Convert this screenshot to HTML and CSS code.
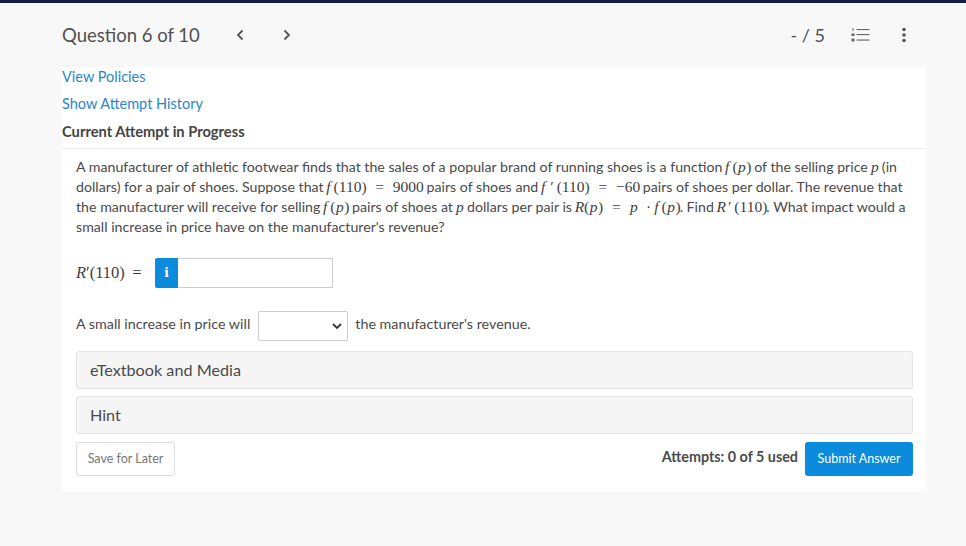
FILE: index.html
```html
<!DOCTYPE html>
<html lang="en">
<head>
<meta charset="utf-8">
<title>Question 6 of 10</title>
<link rel="stylesheet" href="styles.css">
</head>
<body>
<header class="topbar">
  <div class="title-group">
    <h1 class="title">Question 6 of 10</h1>
    <svg class="chev chev-left" width="10" height="12" viewBox="0 0 10 12"><path d="M7.5 1.5 3 6l4.500 4.500" fill="none" stroke="#555" stroke-width="1.800"/></svg>
    <svg class="chev chev-right" width="10" height="12" viewBox="0 0 10 12"><path d="M2.500 1.500 7 6l-4.500 4.500" fill="none" stroke="#555" stroke-width="1.800"/></svg>
  </div>
  <div class="tools">
    <span class="score">- / 5</span>
    <svg class="list-icon" width="20" height="16" viewBox="0 0 20 16"><g fill="#666"><rect x="6.500" y="2" width="13" height="1.100"/><rect x="6.500" y="7" width="13" height="1.100"/><rect x="6.500" y="12.500" width="13" height="1.100"/><rect x="2.500" y="1" width="1" height="3"/><rect x="1.500" y="6.500" width="3" height="2.500"/><rect x="1.500" y="11.500" width="3" height="3"/></g></svg>
    <svg class="dots" width="6" height="16" viewBox="0 0 6 16"><g fill="#555"><circle cx="3" cy="2.500" r="1.800"/><circle cx="3" cy="8" r="1.800"/><circle cx="3" cy="13.500" r="1.800"/></g></svg>
  </div>
</header>
<main class="card">
  <div class="links">
    <a class="link" href="#">View Policies</a>
    <a class="link" href="#">Show Attempt History</a>
    <div class="status">Current Attempt in Progress</div>
  </div>
  <section class="question">
    <p class="text">A manufacturer of athletic footwear finds that the sales of a popular brand of running shoes is a function <span class="m"><i class="f">f</i>(<i class="p">p</i>)</span> of the selling price <span class="m"><i class="p">p</i></span> (in<br>dollars) for a pair of shoes. Suppose that <span class="m"><i class="f">f</i>(110) <span class="eq">&nbsp;=&nbsp;</span> 9000</span> pairs of shoes and <span class="m"><i class="f">f</i><span class="prime">′</span>(110) <span class="eq">&nbsp;=&nbsp;</span> −60</span> pairs of shoes per dollar. The revenue that<br>the manufacturer will receive for selling <span class="m"><i class="f">f</i>(<i class="p">p</i>)</span> pairs of shoes at <span class="m"><i class="p">p</i></span> dollars per pair is <span class="m"><i>R</i>(<i class="p">p</i>) <span class="eq">&nbsp;=&nbsp;</span> <i class="p">p</i> &nbsp;·&thinsp;<i class="f">f</i>(<i class="p">p</i>)</span>. Find <span class="m"><i>R</i><span class="prime">′</span>(110)</span>. What impact would a<br>small increase in price have on the manufacturer's revenue?</p>
    <div class="answer">
      <span class="m answer-label"><i>R</i>′(110) &#8201;=</span>
      <span class="info">i</span>
      <input class="input" type="text" aria-label="Answer">
    </div>
    <div class="select-row">
      <span class="row-text">A small increase in price will</span>
      <span class="select"><svg width="10" height="7" viewBox="0 0 10 7"><path d="M1 1l4 4 4-4" fill="none" stroke="#333" stroke-width="1.800"/></svg></span>
      <span class="row-text">the manufacturer's revenue.</span>
    </div>
    <div class="panel">eTextbook and Media</div>
    <div class="panel panel-hint">Hint</div>
    <div class="actions">
      <button class="save" type="button">Save for Later</button>
      <div class="submit-group">
        <span class="attempts">Attempts: 0 of 5 used</span>
        <button class="submit" type="button">Submit Answer</button>
      </div>
    </div>
  </section>
</main>
</body>
</html>
```
FILE: styles.css
```css
* { box-sizing: border-box; }
html, body { height: 100%; }
body {
  margin: 0;
  background: #f8f8f8;
  border-top: 3px solid #141e46;
  font-family: Lato, "Open Sans", sans-serif;
  color: #4a4a4a;
  font-size: 14.200px;
  overflow: hidden;
}
.topbar {
  height: 64px;
  display: flex;
  align-items: center;
  justify-content: space-between;
  padding: 0 59px 0 62px;
}
.title-group { display: flex; align-items: center; }
.title { margin: 0; font-size: 18.500px; font-weight: 400; color: #505050; width: 173px; }
.chev-right { margin-left: 37px; }
.tools { display: flex; align-items: center; }
.score { font-size: 18px; color: #505050; }
.list-icon { margin-left: 25px; }
.dots { margin-left: 31px; }
.card {
  width: 864px;
  height: 424px;
  margin-left: 62px;
  background: #fff;
}
.links { height: 82px; border-bottom: 1px solid #ececec; }
.link, .status { display: block; height: 27px; line-height: 20px; }
.link { color: #2a86cb; text-decoration: none; font-size: 14.500px; }
.status { font-weight: 700; color: #444; font-size: 14.700px; }
.question { padding: 8px 13px 0 14px; }
.text { margin: 0; line-height: 20px; white-space: nowrap; }
.m { font-family: "Liberation Serif", serif; font-size: 15.500px; color: #3f3f3f; margin: 0 -1px; }
.f { margin-right: 3px; }
.p { margin: 0 .5px; }
.eq { margin: 0 1px; }
.prime { margin: 0 3px 0 2px; }
.answer { display: flex; align-items: center; margin-top: 21px; height: 30px; }
.answer-label { width: 79px; font-size: 16.500px; margin: 0; }
.info {
  width: 23px; height: 30px;
  background: #0a8bdc; color: #fff;
  border-radius: 2px 0 0 2px;
  display: flex; align-items: center; justify-content: center;
  font-family: "DejaVu Serif", serif; font-weight: 700; font-size: 12px;
}
.input { width: 155px; height: 30px; border: 1px solid #ccc; border-left: 0; background: #fff; padding: 0; }
.select-row { display: flex; align-items: flex-start; margin-top: 23px; height: 30px; font-size: 14.300px; }
.row-text { line-height: 26px; }
.select {
  width: 90px; height: 30px; margin: 0 7px 0 8px;
  border: 1px solid #ccc; border-radius: 2px;
  display: flex; align-items: center; justify-content: flex-end; padding-right: 5px;
}
.panel {
  height: 38px; margin-top: 10px;
  background: #f5f5f5;
  border: 1px solid #e3e3e3; border-radius: 3px;
  padding: 0 0 2px 13px;
  display: flex; align-items: center;
  font-size: 16.200px;
  color: #4a4a4a;
}
.panel-hint { margin-top: 7px; }
.actions { display: flex; justify-content: space-between; margin-top: 8px; }
.save {
  width: 99px; height: 34px;
  background: #fff; color: #777;
  border: 1px solid #ddd; border-radius: 3px;
  font: 12.500px Lato, sans-serif;
  padding: 0 0 2px;
}
.submit-group { display: flex; gap: 7px; }
.attempts { font-weight: 700; color: #4a4a4a; line-height: 30px; font-size: 14.350px; }
.submit {
  width: 108px; height: 34px;
  background: #0a8bdc; color: #fff;
  border: 0; border-radius: 3px;
  font: 12.500px Lato, sans-serif;
  padding: 0 0 2px;
}
```
